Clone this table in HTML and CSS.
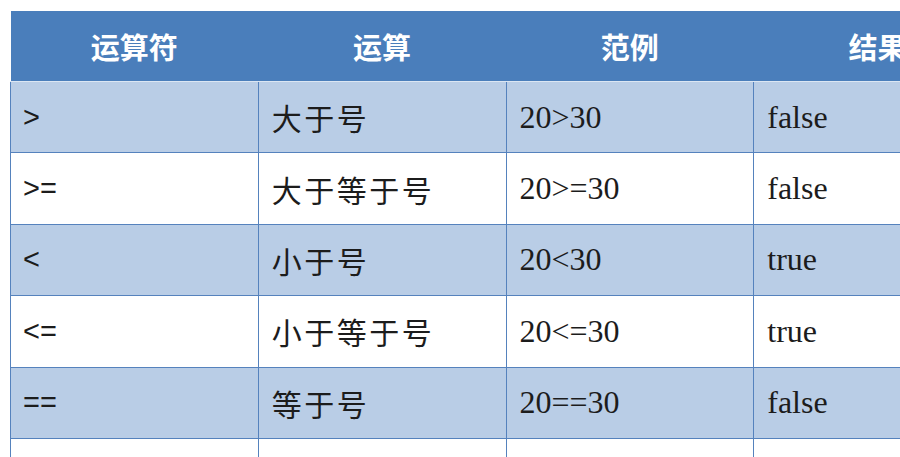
FILE: index.html
```html
<!DOCTYPE html>
<html lang="zh">
<head>
<meta charset="utf-8">
<link rel="stylesheet" href="styles.css">
</head>
<body>
<table class="ops">
  <thead>
    <tr><th>运算符</th><th>运算</th><th>范例</th><th>结果</th></tr>
  </thead>
  <tbody>
    <tr class="alt"><td class="op">&gt;</td><td class="cn">大于号</td><td class="ex">20&gt;30</td><td class="ex">false</td></tr>
    <tr><td class="op">&gt;=</td><td class="cn">大于等于号</td><td class="ex">20&gt;=30</td><td class="ex">false</td></tr>
    <tr class="alt"><td class="op">&lt;</td><td class="cn">小于号</td><td class="ex">20&lt;30</td><td class="ex">true</td></tr>
    <tr><td class="op">&lt;=</td><td class="cn">小于等于号</td><td class="ex">20&lt;=30</td><td class="ex">true</td></tr>
    <tr class="alt"><td class="op">==</td><td class="cn">等于号</td><td class="ex">20==30</td><td class="ex">false</td></tr>
    <tr><td class="op"></td><td class="cn"></td><td class="ex"></td><td class="ex"></td></tr>
  </tbody>
</table>
</body>
</html>
```
FILE: styles.css
```css
html, body {
  margin: 0;
  padding: 0;
  background: #ffffff;
  overflow: hidden;
  width: 900px;
  height: 457px;
}
body {
  padding: 11px 0 0 10px;
  box-sizing: border-box;
}
.ops {
  border-collapse: collapse;
  table-layout: fixed;
  width: 992px;
}
.ops th {
  background: #4a7ebb;
  color: #ffffff;
  font-family: "Noto Sans CJK SC", sans-serif;
  font-weight: 700;
  font-size: 29px;
  height: 70px;
  padding: 0;
  text-align: center;
  border: none;
  border-bottom: 1px solid #dbe6f3;
}
.ops td {
  height: 70.4px;
  padding: 0 0 0 13px;
  border: 1.5px solid #5582bd;
  color: #1c1c1c;
  font-size: 29px;
  background: #ffffff;
  white-space: nowrap;
  overflow: hidden;
}
.ops tr.alt td {
  background: #b9cde6;
}
.ops td.op {
  font-family: "Liberation Sans", sans-serif;
  padding-left: 12px;
}
.ops td.cn {
  font-family: "Noto Sans CJK SC", sans-serif;
  font-weight: 400;
  font-size: 30px;
  letter-spacing: 2.5px;
}
.ops td.ex {
  font-family: "Liberation Serif", serif;
  font-size: 32px;
}
```
